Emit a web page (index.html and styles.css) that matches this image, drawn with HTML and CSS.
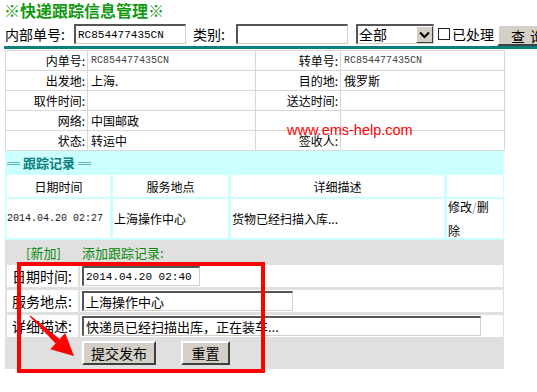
FILE: index.html
```html
<!DOCTYPE html>
<html lang="zh-CN">
<head>
    <meta charset="UTF-8">
    <title>快递跟踪信息管理</title>
    <link rel="stylesheet" href="styles.css">
</head>
<body>
<div class="page">
    <h1 class="title">※快递跟踪信息管理※</h1>

    <form class="search">
        <label class="search-label">内部单号:</label>
        <input class="field field-no" type="text" value="RC854477435CN">
        <label class="search-label label-type">类别:</label>
        <input class="field field-type" type="text" value="">
        <div class="select">
            <span class="select-text">全部</span>
            <span class="select-btn">
                <svg width="11" height="8" viewBox="0 0 11 8"><path d="M1 1.5 L5.5 6 L10 1.5" fill="none" stroke="#000" stroke-width="2"/></svg>
            </span>
        </div>
        <label class="check"><input type="checkbox">已处理</label>
        <button type="button" class="btn btn-query">查 询</button>
    </form>
    <div class="rule"></div>

    <table class="info">
        <colgroup>
            <col style="width: 82px">
            <col style="width: 168px">
            <col style="width: 85px">
            <col style="width: 164px">
        </colgroup>
        <tr>
            <td class="info-label">内单号:</td>
            <td class="info-value mono">RC854477435CN</td>
            <td class="info-label">转单号:</td>
            <td class="info-value mono">RC854477435CN</td>
        </tr>
        <tr>
            <td class="info-label">出发地:</td>
            <td class="info-value">上海.</td>
            <td class="info-label">目的地:</td>
            <td class="info-value">俄罗斯</td>
        </tr>
        <tr>
            <td class="info-label">取件时间:</td>
            <td class="info-value"></td>
            <td class="info-label">送达时间:</td>
            <td class="info-value"></td>
        </tr>
        <tr>
            <td class="info-label">网络:</td>
            <td class="info-value">中国邮政</td>
            <td class="info-label"></td>
            <td class="info-value"></td>
        </tr>
        <tr>
            <td class="info-label">状态:</td>
            <td class="info-value">转运中</td>
            <td class="info-label">签收人:</td>
            <td class="info-value"></td>
        </tr>
    </table>

    <section class="track">
        <h2 class="track-title">═ 跟踪记录 ═</h2>
        <div class="track-grid">
            <div class="track-cell track-head">日期时间</div>
            <div class="track-cell track-head">服务地点</div>
            <div class="track-cell track-head">详细描述</div>
            <div class="track-cell track-head"></div>

            <div class="track-cell track-date">2014.04.20 02:27</div>
            <div class="track-cell">上海操作中心</div>
            <div class="track-cell">货物已经扫描入库...</div>
            <div class="track-cell track-ops"><p>修改<span class="sep">/</span>删除</p></div>
        </div>
    </section>

    <section class="add">
        <div class="add-head">
            <span class="add-new">[新加]</span>
            <span class="add-caption">添加跟踪记录:</span>
        </div>
        <div class="add-row">
            <div class="add-label">日期时间:</div>
            <div class="add-cell"><input class="field field-date" type="text" value="2014.04.20 02:40"></div>
        </div>
        <div class="add-row">
            <div class="add-label">服务地点:</div>
            <div class="add-cell"><input class="field field-place" type="text" value="上海操作中心"></div>
        </div>
        <div class="add-row">
            <div class="add-label">详细描述:</div>
            <div class="add-cell"><input class="field field-desc" type="text" value="快递员已经扫描出库，正在装车..."></div>
        </div>
        <div class="add-actions">
            <button type="button" class="btn btn-submit">提交发布</button>
            <button type="button" class="btn btn-reset">重置</button>
        </div>

        <div class="highlight"></div>
        <svg class="arrow" width="100" height="130" viewBox="0 0 100 130">
            <polygon points="24.7,76.4 25.3,75.6 54.7,99 50.7,103.4" fill="#f00"/>
            <polygon points="45.3,109.3 60.1,93.1 69,116" fill="#f00"/>
        </svg>
    </section>

    <div class="watermark">www.ems-help.com</div>
</div>
</body>
</html>
```

FILE: styles.css
```css
* {
    margin: 0;
    padding: 0;
    box-sizing: border-box;
}

body {
    font-family: "Noto Sans CJK SC", "Liberation Sans", sans-serif;
    font-size: 12px;
    color: #000;
    background: #fff;
    overflow: hidden;
}

.page {
    position: relative;
    width: 537px;
    height: 392px;
    padding-left: 4px;
}

.mono {
    font-family: "Liberation Mono", "Noto Sans CJK SC", monospace;
}

/* title + search bar */
.title {
    font-size: 16px;
    line-height: 20px;
    font-weight: bold;
    color: #119a11;
    white-space: nowrap;
}

.search {
    display: flex;
    align-items: flex-start;
    height: 22px;
    margin-top: 4px;
    padding-left: 1px;
    font-size: 14px;
    white-space: nowrap;
}

.search > * {
    flex-shrink: 0;
}

.search-label {
    width: 69px;
    line-height: 20px;
}

.label-type {
    width: 43px;
    margin-left: 7px;
}

.field {
    height: 20px;
    border-style: solid;
    border-width: 2px 1px 1px 2px;
    border-color: #555 #d4d0c8 #d4d0c8 #555;
    background: #fff;
    padding: 0 2px;
    font-family: "Noto Sans CJK SC", sans-serif;
    font-size: 13px;
    color: #000;
    outline: none;
}

.field-no,
.field-type {
    width: 112px;
}

.field-no {
    font-family: "Liberation Mono", monospace;
    font-size: 11px;
}

.select {
    display: flex;
    align-items: stretch;
    width: 78px;
    height: 20px;
    margin-left: 8px;
    border-style: solid;
    border-width: 2px 1px 1px 2px;
    border-color: #555 #d4d0c8 #d4d0c8 #555;
    background: #fff;
}

.select-text {
    flex: 1;
    padding-left: 1px;
    line-height: 17px;
}

.select-btn {
    display: flex;
    align-items: center;
    justify-content: center;
    width: 17px;
    background: #d4d0c8;
    border: 1px solid;
    border-color: #fff #404040 #404040 #fff;
}

.check {
    display: flex;
    align-items: center;
    margin-left: 4px;
    line-height: 20px;
}

.check input {
    appearance: none;
    width: 12px;
    height: 12px;
    margin-right: 2px;
    border: 1px solid #222;
    background: #fff;
}

.btn {
    height: 24px;
    background: #d4d0c8;
    border: 2px solid;
    border-color: #fff #404040 #404040 #fff;
    font-family: "Noto Sans CJK SC", sans-serif;
    font-size: 14px;
    color: #000;
}

.btn-query {
    width: 62px;
    height: 22px;
    margin-left: 3px;
    letter-spacing: 1px;
}

.rule {
    height: 3px;
    background: #0a7f7f;
}

/* info table */
.info {
    margin: 1px 0 0 1px;
    width: 500px;
    border-collapse: collapse;
    table-layout: fixed;
}

.info tr {
    height: 20px;
}

.info td {
    border: 1px solid #d8d8d8;
    padding: 0;
    line-height: 18px;
    white-space: nowrap;
}

.info-label {
    text-align: right;
    padding-right: 2px !important;
}

.info-value {
    padding-left: 3px !important;
}

.info-value.mono {
    font-size: 10px;
    color: #444;
}

/* tracking records */
.track {
    width: 499px;
    margin-left: 1px;
    background: #ccffff;
}

.track-title {
    height: 24px;
    line-height: 24px;
    padding-left: 2px;
    font-size: 13px;
    font-weight: bold;
    color: #0a7f7f;
}

.track-grid {
    display: grid;
    grid-template-columns: 103px 115px 213px 56px;
    grid-template-rows: 22px 39px;
    gap: 2px 3px;
    padding: 0 1px 2px 2px;
}

.track-cell {
    display: flex;
    align-items: center;
    background: #fff;
    padding-left: 1px;
    white-space: nowrap;
}

.track-head {
    justify-content: center;
    padding-left: 0;
}

.track-date {
    padding-left: 0;
    font-family: "Liberation Mono", monospace;
    font-size: 10px;
    color: #222;
}

.track-ops {
    white-space: normal;
    line-height: 24px;
    padding-right: 8px;
    overflow: visible;
}

.sep {
    color: #999;
}

/* add record form */
.add {
    position: relative;
    width: 499px;
    height: 129px;
    margin-left: 1px;
    background: #e0e0e0;
}

.add-head {
    display: flex;
    height: 25px;
    line-height: 25px;
    font-size: 13px;
    color: #0a8a0a;
}

.add-new {
    width: 56px;
    margin-left: 21px;
}

.add-row {
    display: flex;
    gap: 2px;
    height: 22px;
    margin: 0 1px 3px 2px;
}

.add-row:first-of-type {
    height: 23px;
}

.add-label {
    width: 71px;
    background: #fff;
    text-align: right;
    padding-right: 6px;
    font-size: 14px;
    line-height: 22px;
    white-space: nowrap;
}

.add-cell {
    flex: 1;
    display: flex;
    align-items: center;
    background: #fff;
    padding-left: 2px;
}

.field-date {
    width: 118px;
    font-family: "Liberation Mono", monospace;
    font-size: 11px;
}

.field-place {
    width: 211px;
}

.field-desc {
    width: 399px;
}

.add-actions {
    display: flex;
    gap: 25px;
    padding: 1px 0 0 77px;
}

.btn-submit {
    width: 74px;
}

.btn-reset {
    width: 49px;
}

/* annotations drawn over the screenshot */
.highlight {
    position: absolute;
    left: 12px;
    top: 22px;
    width: 248px;
    height: 111px;
    border: 4px solid #f00;
}

.arrow {
    position: absolute;
    left: 0;
    top: 0;
}

.watermark {
    position: absolute;
    left: 287px;
    top: 122px;
    font-family: "Liberation Sans", Arial, sans-serif;
    font-size: 14.5px;
    line-height: 16px;
    color: #f00;
}
```
